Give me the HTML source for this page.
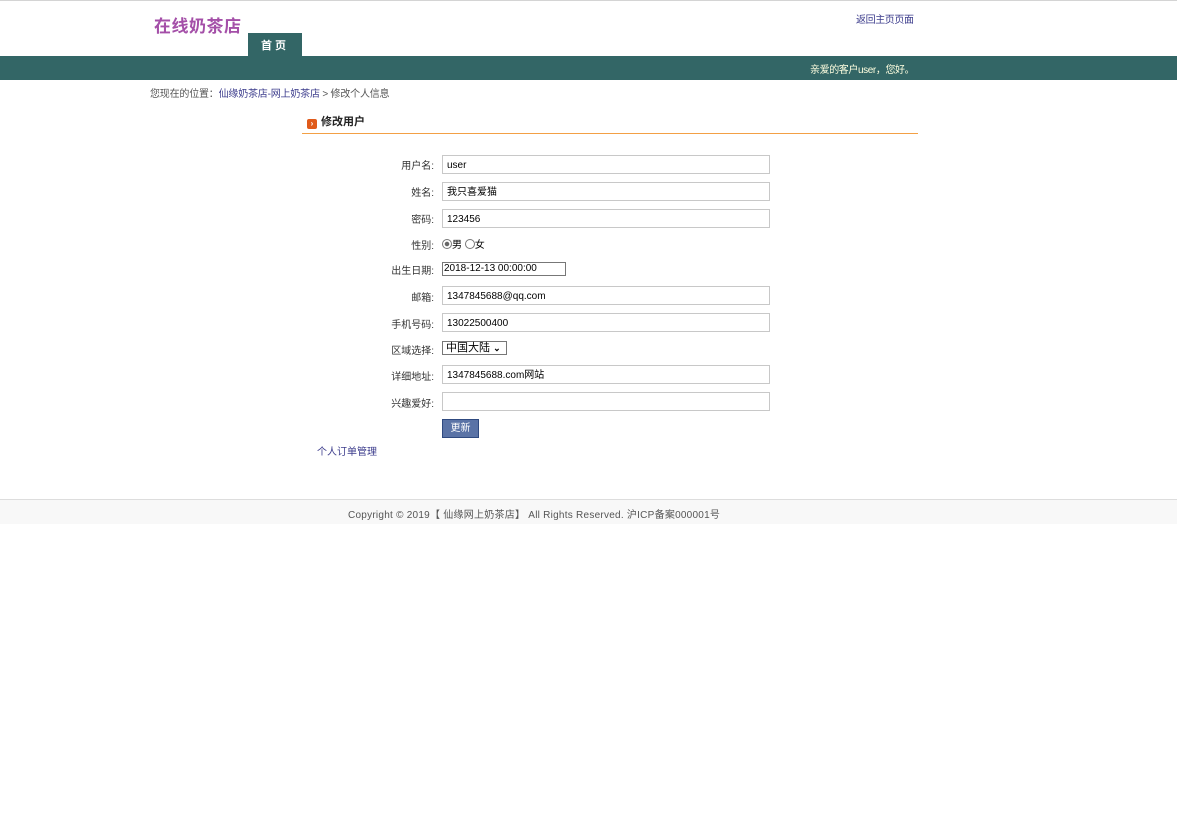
<!DOCTYPE html>
<html><head><meta charset="utf-8"><style>
body{margin:0;background:#fff;font-family:"Liberation Sans","Noto Sans CJK SC",sans-serif;font-size:10px;color:#333;}
.abs{position:absolute;white-space:nowrap}
.topline{position:absolute;left:0;top:0;width:1177px;height:1px;background:#d4d4d4;}
.logo{left:154px;top:12px;font-size:17px;font-weight:bold;color:#a44fa8;letter-spacing:0.5px;}
.home{left:856px;top:11px;font-size:10px;color:#3c3c8c;letter-spacing:-0.4px}
.tab{left:248px;top:33px;width:54px;height:23px;background:#336666;color:#fff;font-weight:bold;font-size:11px;text-align:center;line-height:26px;letter-spacing:3px;}
.bar{left:0;top:56px;width:1177px;height:24px;background:#336666;}
.greet{left:810px;top:61px;color:#ffffe0;font-size:10px;letter-spacing:-0.4px}
.crumb{left:150px;top:85px;color:#555;letter-spacing:-0.2px}
.crumb a{color:#3c3c8c;text-decoration:none}
.title{left:307px;top:113px;font-weight:bold;font-size:11px;color:#222;}
.ico{display:inline-block;width:10px;height:10px;background:#e05a1a;border-radius:2px;vertical-align:-1px;margin-right:4px;color:#fff;font-size:8px;line-height:10px;text-align:center}
.oline{left:302px;top:133px;width:616px;height:1px;background:#f3a045;}
.lbl{position:absolute;right:743px;font-size:10px;color:#333;text-align:right;white-space:nowrap}
.inp{position:absolute;left:442px;border:1px solid #c8c8c8;font-size:10px;color:#000;line-height:15px;padding:2px 0 0 4px;box-sizing:border-box;width:328px;height:19px}
.btn{left:442px;top:419px;width:37px;height:19px;background:#5a73a6;border:1px solid #2f4a80;box-sizing:border-box;color:#fff;font-size:10px;text-align:center;line-height:17px}
.link{left:317px;top:443px;color:#3c3c8c;}
.fline{left:0;top:499px;width:1177px;height:1px;background:#ddd;}
.foot{left:0;top:500px;width:1177px;height:24px;background:#f8f8f8;}
.ftxt{left:348px;top:506px;color:#555;font-size:10px;letter-spacing:0.25px}
</style></head><body>
<div class="topline"></div>
<div class="abs logo">在线奶茶店</div>
<div class="abs home">返回主页页面</div>
<div class="abs tab">首页</div>
<div class="abs bar"></div>
<div class="abs greet">亲爱的客户user，您好。</div>
<div class="abs crumb">您现在的位置：<a>仙缘奶茶店-网上奶茶店</a> &gt; 修改个人信息</div>
<div class="abs title"><span class="ico">›</span>修改用户</div>
<div class="abs oline"></div>

<div class="lbl" style="top:157px">用户名:</div><div class="inp" style="top:155px">user</div>
<div class="lbl" style="top:184px">姓名:</div><div class="inp" style="top:182px">我只喜爱猫</div>
<div class="lbl" style="top:211px">密码:</div><div class="inp" style="top:209px">123456</div>
<div class="lbl" style="top:237px">性别:</div>
<div class="abs" style="left:442px;top:236px;font-size:10px;color:#000"><span style="display:inline-block;width:8px;height:8px;border:1px solid #777;border-radius:50%;vertical-align:-1px;background:radial-gradient(#666 35%,#fff 45%)"></span>男 <span style="display:inline-block;width:8px;height:8px;border:1px solid #777;border-radius:50%;vertical-align:-1px"></span>女</div>
<div class="lbl" style="top:262px">出生日期:</div><div class="inp" style="top:262px;width:124px;height:14px;line-height:12px;border-color:#777;padding:0 0 0 1px">2018-12-13 00:00:00</div>
<div class="lbl" style="top:289px">邮箱:</div><div class="inp" style="top:286px">1347845688@qq.com</div>
<div class="lbl" style="top:316px">手机号码:</div><div class="inp" style="top:313px">13022500400</div>
<div class="lbl" style="top:342px">区域选择:</div><div class="inp" style="top:341px;width:65px;height:14px;line-height:12px;border-color:#777;padding:0 0 0 3px;font-size:11px">中国大陆 <b style="font-size:9px">⌄</b></div>
<div class="lbl" style="top:368px">详细地址:</div><div class="inp" style="top:365px">1347845688.com网站</div>
<div class="lbl" style="top:395px">兴趣爱好:</div><div class="inp" style="top:392px"></div>
<div class="abs btn">更新</div>
<div class="abs link">个人订单管理</div>

<div class="abs fline"></div>
<div class="abs foot"></div>
<div class="abs ftxt">Copyright © 2019【 仙缘网上奶茶店】 All Rights Reserved. 沪ICP备案000001号</div>
</body></html>
